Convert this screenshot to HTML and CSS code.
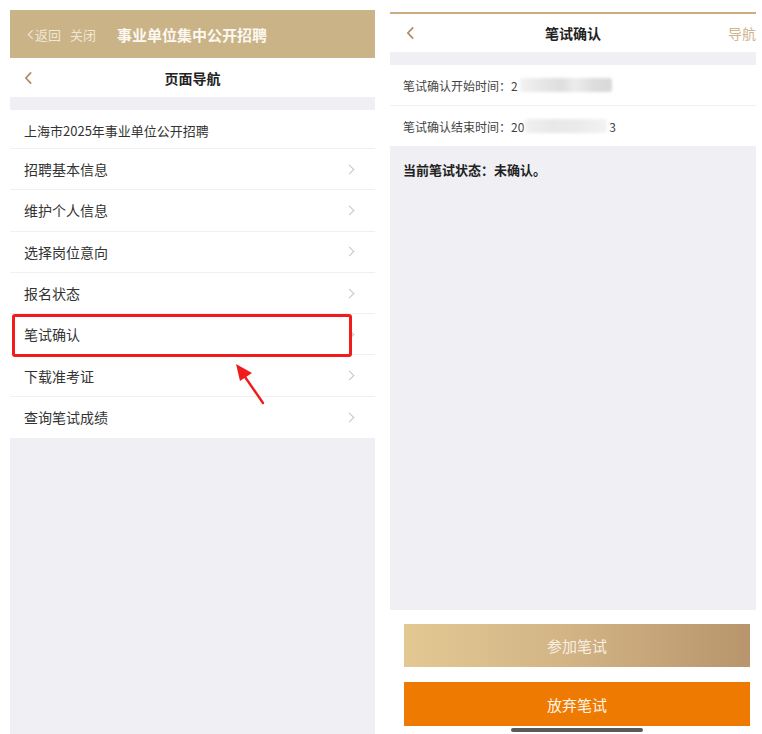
FILE: index.html
```html
<!DOCTYPE html>
<html lang="zh">
<head>
<meta charset="utf-8">
<title>笔试确认</title>
<link rel="stylesheet" href="styles.css">
</head>
<body>
<div class="page">
  <section class="phone phone-left">
    <header class="topbar">
      <span class="top-back"><svg class="top-chev" viewBox="0 0 8 12" width="7" height="11"><path d="M6.5 1 L1.5 6 L6.5 11" fill="none" stroke="#f1e8d6" stroke-width="1.3"/></svg>返回</span>
      <span class="top-close">关闭</span>
      <span class="top-title">事业单位集中公开招聘</span>
    </header>
    <nav class="navbar">
      <svg class="nav-chev" viewBox="0 0 10 16" width="9" height="14"><path d="M8 1.5 L2 8 L8 14.5" fill="none" stroke="#b38b64" stroke-width="2"/></svg>
      <span class="nav-title">页面导航</span>
      <span class="nav-right"></span>
    </nav>
    <div class="band"></div>
    <ul class="menu">
      <li class="menu-item menu-head">上海市2025年事业单位公开招聘</li>
      <li class="menu-item"><span>招聘基本信息</span><i class="chev"></i></li>
      <li class="menu-item"><span>维护个人信息</span><i class="chev"></i></li>
      <li class="menu-item"><span>选择岗位意向</span><i class="chev"></i></li>
      <li class="menu-item"><span>报名状态</span><i class="chev"></i></li>
      <li class="menu-item"><span>笔试确认</span><i class="chev"></i></li>
      <li class="menu-item"><span>下载准考证</span><i class="chev"></i></li>
      <li class="menu-item menu-last"><span>查询笔试成绩</span><i class="chev"></i></li>
    </ul>
    <div class="filler"></div>
    <div class="highlight"></div>
    <svg class="arrow" viewBox="0 0 40 50" width="40" height="50">
      <path d="M31 44 L11 15" stroke="#f01c1c" stroke-width="2.4" fill="none" stroke-linecap="round"/>
      <path d="M4 5 L20 14 L8 22 Z" fill="#f01c1c"/>
    </svg>
  </section>

  <section class="phone phone-right">
    <nav class="navbar navbar-r">
      <svg class="nav-chev" viewBox="0 0 10 16" width="9" height="14"><path d="M8 1.5 L2 8 L8 14.5" fill="none" stroke="#b38b64" stroke-width="2"/></svg>
      <span class="nav-title">笔试确认</span>
      <span class="nav-right">导航</span>
    </nav>
    <div class="band"></div>
    <div class="info-row"><span>笔试确认开始时间：2</span><span class="blur blur-1"></span></div>
    <div class="info-row info-last"><span>笔试确认结束时间：20</span><span class="blur blur-2"></span><span class="tail">3</span></div>
    <div class="status-area">
      <p class="status">当前笔试状态：未确认。</p>
    </div>
    <div class="actions">
      <button class="btn btn-join">参加笔试</button>
      <button class="btn btn-quit">放弃笔试</button>
      <div class="home-bar"></div>
    </div>
  </section>
</div>
</body>
</html>
```
FILE: styles.css
```css
* { box-sizing: border-box; }
html, body { margin: 0; padding: 0; background: #fff; }
body {
  font-family: "Noto Sans CJK SC", "Noto Sans", sans-serif;
  color: #333;
}
.page {
  display: flex;
  gap: 15px;
  padding-left: 10px;
  height: 734px;
  overflow: hidden;
}
.phone {
  display: flex;
  flex-direction: column;
  position: relative;
}
.phone-left {
  width: 365px;
  padding-top: 10px;
}
.phone-right {
  width: 366px;
  margin-top: 12px;
  border-top: 2px solid #c9ac80;
}

/* gold top bar */
.topbar {
  height: 48px;
  background: #c9b387;
  display: flex;
  align-items: center;
  padding-left: 17px;
  color: #f0e7d5;
  font-size: 13px;
}
.top-back { display: flex; align-items: center; gap: 1px; }
.top-chev { margin-top: 1px; }
.top-close { margin-left: 9px; }
.top-title {
  margin-left: 21px;
  color: #fcf8f0;
  font-size: 15px;
  font-weight: 700;
}

/* nav bar */
.navbar {
  height: 39px;
  display: grid;
  grid-template-columns: 60px 1fr 60px;
  align-items: center;
  background: #fff;
}
.navbar-r { height: 38px; }
.nav-chev { margin-left: 14px; }
.navbar-r .nav-chev { margin-left: 16px; }
.nav-title {
  text-align: center;
  font-size: 14px;
  font-weight: 700;
  color: #222;
}
.nav-right {
  text-align: right;
  font-size: 14px;
  color: #cfb48d;
  padding-right: 0;
}
.band {
  height: 13px;
  background: #efeff4;
}

/* list */
.menu {
  list-style: none;
  margin: 0;
  padding: 0;
}
.menu-item {
  height: 41.3px;
  display: flex;
  align-items: center;
  justify-content: space-between;
  padding: 0 20px 0 14px;
  font-size: 14px;
  color: #333;
  border-bottom: 1px solid #f0f0f0;
}
.menu-head { height: 39px; font-size: 13px; padding-top: 2px; }
.menu-last { border-bottom: none; }
.chev {
  width: 7px;
  height: 7px;
  border-top: 1.3px solid #c4c4c4;
  border-right: 1.3px solid #c4c4c4;
  transform: rotate(45deg);
  margin-right: 2px;
}
.filler {
  flex: 1;
  background: #efeff4;
}

/* annotations */
.highlight {
  position: absolute;
  left: 2px;
  top: 314px;
  width: 340px;
  height: 43px;
  border: 3px solid #f21b1b;
  border-radius: 3px;
}
.arrow {
  position: absolute;
  left: 222px;
  top: 359px;
}

/* right phone content */
.info-row {
  height: 41px;
  display: flex;
  align-items: center;
  padding-left: 13px;
  font-size: 12px;
  color: #444;
  border-bottom: 1px solid #f0f0f0;
}
.info-last { border-bottom: none; height: 40px; }
.blur {
  display: block;
  height: 14px;
  border-radius: 3px;
  filter: blur(1.5px);
}
.blur-1 {
  width: 92px;
  margin-left: 2px;
  background: linear-gradient(90deg, #f2f2f2 0%, #e6e6e6 25%, #dedede 45%, #ececec 60%, #dddddd 80%, #d8d8d8 100%);
}
.blur-2 {
  width: 82px;
  margin-left: 1px;
  background: linear-gradient(90deg, #f0f0f0 0%, #e8e8e8 35%, #eaeaea 60%, #f3f3f3 100%);
}
.tail { margin-left: 2px; }
.status-area {
  flex: 1;
  background: #efeff4;
  padding: 14px 13px;
}
.status {
  margin: 0;
  font-size: 13px;
  font-weight: 700;
  color: #222;
}
.actions {
  height: 124px;
  display: flex;
  flex-direction: column;
  align-items: flex-start;
  padding-top: 14px;
  padding-left: 14px;
  gap: 15px;
  position: relative;
}
.btn {
  width: 346px;
  height: 43px;
  border: none;
  font-family: inherit;
  font-size: 15px;
}
.btn-join {
  background: linear-gradient(90deg, #e3c893 0%, #d3b586 45%, #b8956c 100%);
  color: #f7efe2;
}
.btn-quit {
  background: #ee7a02;
  color: #fff6ea;
  height: 44px;
}
.home-bar {
  position: absolute;
  left: 121px;
  bottom: 2px;
  width: 132px;
  height: 4px;
  border-radius: 2px;
  background: #5a5a5a;
}
```
